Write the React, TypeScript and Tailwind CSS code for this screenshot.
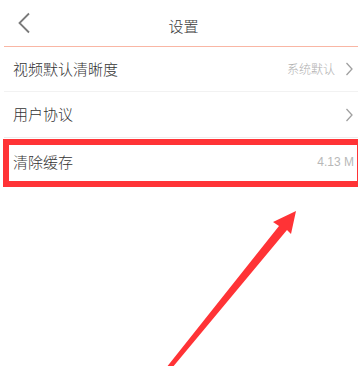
import React from 'react';

const font = { fontFamily: '"Noto Sans CJK SC", "Noto Sans", sans-serif' };

const Chevron = () => (
    <svg width="8" height="14" viewBox="0 0 8 14" className="shrink-0">
        <polyline points="1.5,1 7,7 1.5,13" fill="none" stroke="#a0a0a0" strokeWidth="1.3" />
    </svg>
);

const App = () => {
    return (
        <div className="relative w-[358px] h-[366px] bg-white overflow-hidden font-light" style={font}>
            {/* header */}
            <div className="relative h-[46px] flex items-center justify-center pl-[9px] pt-[4px]">
                <svg width="14" height="22" viewBox="0 0 14 22" className="absolute left-[17px] top-[12px]">
                    <polyline points="12,1.5 2.5,11 12,20.5" fill="none" stroke="#7a7a7a" strokeWidth="1.8" />
                </svg>
                <span className="text-[15px] text-[#3a3a3a] leading-none">设置</span>
            </div>
            <div className="ml-[4px] h-px bg-[#f9b6a4]" />

            <div className="pl-[4px]">
                <div className="h-[45px] flex items-center pl-[9px] pr-[5px] border-b border-[#f2f2f2]">
                    <span className="flex-1 text-[15px] text-[#333]">视频默认清晰度</span>
                    <span className="text-[12px] text-[#b0b0b0] mr-[10px]">系统默认</span>
                    <Chevron />
                </div>
                <div className="h-[46px] flex items-center pl-[9px] pr-[5px] border-b border-[#ececec]">
                    <span className="flex-1 text-[15px] text-[#333]">用户协议</span>
                    <Chevron />
                </div>
                <div className="h-[48px] flex items-center pl-[9px] pr-[4px]">
                    <span className="flex-1 text-[15px] text-[#333]">清除缓存</span>
                    <span className="text-[12px] text-[#b8b8b8]" style={{ fontFamily: '"Liberation Sans", sans-serif' }}>4.13 M</span>
                </div>
            </div>

            {/* annotation box */}
            <div className="absolute left-[3px] top-[139px] w-[360px] h-[48px] border-[6px] border-[#ff3336]" />

            {/* annotation arrow */}
            <svg width="358" height="366" viewBox="0 0 358 366" className="absolute left-0 top-0 pointer-events-none">
                <polygon
                    points="296,211 273,222 279,226 166,368 172,368 287,230 291,234"
                    fill="#ff3336"
                />
            </svg>
        </div>
    );
};

export default App;
